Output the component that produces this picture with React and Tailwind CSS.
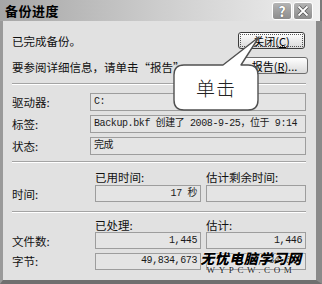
import React from 'react'

const cjk = '"Noto Sans CJK SC", "Liberation Sans", sans-serif'
const mono = '"Liberation Mono", "Noto Sans CJK SC", monospace'

function Field({ children, right, short, className = '' }) {
  return (
    <div
      className={`${short ? 'h-[17px]' : 'h-[18px]'} border border-[#9d9d9d] bg-[#e4e4e4] flex items-center px-[3px] overflow-hidden whitespace-nowrap text-[10px] text-[#1a1a1a] tracking-[-0.4px] ${
        right ? 'justify-end' : ''
      } ${className}`}
      style={{ fontFamily: mono }}
    >
      {children}
    </div>
  )
}

function Sep({ className = '' }) {
  return (
    <div className={`ml-[9px] mr-[10px] ${className}`}>
      <div className="h-px bg-[#a4a4a4]" />
      <div className="h-px bg-white" />
    </div>
  )
}

function Btn({ children, focus, className = '' }) {
  return (
    <div
      className={`w-[67px] h-[17px] rounded-[3px] border ${
        focus ? 'border-[#3c3c3c]' : 'border-[#6e6e6e]'
      } bg-gradient-to-b from-white to-[#dadada] p-[2px] ${className}`}
    >
      <div
        className={`h-full flex items-center justify-center text-[11px] text-black ${
          focus ? 'outline outline-1 outline-dotted outline-[#555]' : ''
        }`}
      >
        {children}
      </div>
    </div>
  )
}

export default function App() {
  return (
    <div
      className="relative w-[322px] h-[284px] overflow-hidden bg-[#e1e1e1] text-[11.5px] leading-[14px] text-[#111]"
      style={{ fontFamily: cjk }}
    >
      {/* title bar */}
      <div className="h-[21px] flex items-center justify-between pl-[5px] pr-[7px] bg-gradient-to-r from-[#a6a6a6] via-[#cdcdcd] to-[#f0f0f0] border-r-[2px] border-[#7a7a7a]">
        <span className="font-bold text-[13px] text-black tracking-[0.5px]">备份进度</span>
        <div className="flex gap-[1px]">
          <div className="w-[20px] h-[18px] rounded-[3px] border border-white bg-gradient-to-b from-[#b4b4b4] to-[#8c8c8c] flex items-center justify-center text-white font-bold text-[14px] leading-none [text-shadow:0_0_1px_#333]">
            ?
          </div>
          <div className="w-[20px] h-[18px] rounded-[3px] border border-white bg-gradient-to-b from-[#b4b4b4] to-[#8c8c8c] flex items-center justify-center">
            <svg width="12" height="12" viewBox="0 0 12 12">
              <path d="M1.5 1.5 L10.5 10.5 M10.5 1.5 L1.5 10.5" stroke="#555" strokeWidth="3.2" />
              <path d="M1.5 1.5 L10.5 10.5 M10.5 1.5 L1.5 10.5" stroke="#fff" strokeWidth="1.8" />
            </svg>
          </div>
        </div>
      </div>

      {/* body */}
      <div className="h-[263px] flex flex-col border-l-[3px] border-l-[#9a9a9a] border-r-[6px] border-r-[#8a8a8a] border-b-[4px] border-b-[#6f6f6f]">
        <div className="mt-[11px] h-[17px] flex items-center justify-between pl-[9px] pr-[11px]">
          <span>已完成备份。</span>
          <Btn focus>
            关闭(<span className="underline">C</span>)
          </Btn>
        </div>
        <div className="mt-[8px] h-[17px] flex items-end justify-between pl-[9px] pr-[8px]">
          <span className="whitespace-nowrap">要参阅详细信息，请单击“报告”...</span>
          <Btn>
            报告(<span className="underline">R</span>)...
          </Btn>
        </div>

        <Sep className="mt-[9px]" />

        <div className="mt-[8px] grid grid-cols-[78px_1fr] items-center gap-y-[4px] pl-[9px] pr-[10px]">
          <span>驱动器:</span>
          <Field>C:</Field>
          <span>标签:</span>
          <Field>Backup.bkf 创建了 2008-9-25，位于 9:14</Field>
          <span>状态:</span>
          <Field>完成</Field>
        </div>

        <Sep className="mt-[6px]" />

        <div className="mt-[7px] grid grid-cols-[78px_106px_1fr] grid-rows-[14px_17px] gap-y-[1px] gap-x-[5px] items-center pl-[9px] pr-[10px]">
          <span />
          <span>已用时间:</span>
          <span>估计剩余时间:</span>
          <span>时间:</span>
          <Field right short>
            17 秒
          </Field>
          <Field short />
        </div>

        <Sep className="mt-[9px]" />

        <div className="mt-[5px] grid grid-cols-[78px_106px_1fr] grid-rows-[14px_17px_17px] gap-x-[5px] items-center pl-[9px] pr-[10px]">
          <span />
          <span>已处理:</span>
          <span>估计:</span>
          <span>文件数:</span>
          <Field right short>
            1,445
          </Field>
          <Field right short>
            1,446
          </Field>
          <span className="mt-[7px]">字节:</span>
          <Field right short className="mt-[7px]">
            49,834,673
          </Field>
          <Field right short className="mt-[7px]">
            49,834,677
          </Field>
        </div>
      </div>

      {/* callout */}
      <div className="absolute left-[172px] top-[35px] w-[92px] h-[78px]">
        <svg width="92" height="78" viewBox="0 0 92 78" className="absolute inset-0">
          <path
            d="M12 30 L51 30 L87 2 L69 30 L76 30 Q86 30 86 40 L86 65 Q86 75 76 75 L12 75 Q2 75 2 65 L2 40 Q2 30 12 30 Z"
            fill="#fff"
            stroke="#505050"
            strokeWidth="1.4"
            strokeLinejoin="round"
          />
        </svg>
        <div className="absolute left-[2px] top-[30px] w-[84px] h-[45px] flex items-center justify-center text-[19px] leading-none font-light text-[#222] tracking-[1px]">
          单击
        </div>
      </div>

      {/* watermark */}
      <div className="absolute left-[199px] top-[251px] w-[104px] flex flex-col items-center leading-none">
        <span className="text-[14px] font-black text-black tracking-[0.5px] italic [text-shadow:0_0_2px_#fff,0_0_1px_#fff]">
          无忧电脑学习网
        </span>
        <span
          className="mt-[1px] text-[9px] text-[#222] tracking-[3.6px] [text-shadow:0_0_2px_#fff]"
          style={{ fontFamily: '"Liberation Serif", serif' }}
        >
          WYPCW.COM
        </span>
      </div>
    </div>
  )
}
